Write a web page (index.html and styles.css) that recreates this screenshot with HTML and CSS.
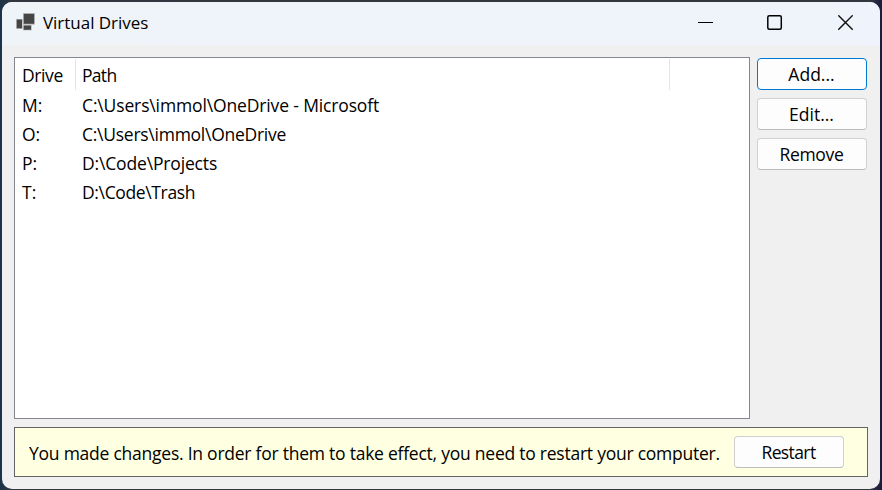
FILE: index.html
```html
<!DOCTYPE html>
<html lang="en">
<head>
<meta charset="utf-8">
<title>Virtual Drives</title>
<link rel="stylesheet" href="styles.css">
</head>
<body>
<main class="window">
  <header class="titlebar">
    <svg class="app-icon" width="20" height="18" viewBox="0 0 20 18">
      <g fill="#c9c9cb"><rect x="0" y="6" width="7" height="10"/><rect x="7" y="0" width="12" height="12"/><rect x="7" y="12" width="9" height="5.500"/></g>
      <g fill="#454545"><rect x=".7" y="6.500" width="5.300" height="8.800"/><rect x="7.700" y=".8" width="10.500" height="10"/><rect x="7.700" y="12.500" width="7.300" height="4.300"/></g>
    </svg>
    <h1 class="title"><span class="t-title">Virtual Drives</span></h1>
    <div class="controls">
      <svg width="16" height="16" viewBox="0 0 16 16"><path d="M0 7.500H15" stroke="#000"/></svg>
      <svg width="16" height="16" viewBox="0 0 16 16"><rect x=".8" y=".8" width="13.500" height="13.500" rx="1.500" fill="none" stroke="#000" stroke-width="1.500"/></svg>
      <svg width="16" height="16" viewBox="0 0 16 16"><path d="M.3 .3L14.700 14.700M14.700 .3L.3 14.700" stroke="#111" stroke-width="1.400"/></svg>
    </div>
  </header>
  <section class="content">
    <div class="list">
      <div class="row head"><div class="cell"><span class="t-drive">Drive</span></div><div class="cell"><span class="t-path">Path</span></div></div>
      <div class="row"><div class="cell"><span>M:</span></div><div class="cell"><span class="t-m">C:\Users\immol\OneDrive - Microsoft</span></div></div>
      <div class="row"><div class="cell"><span>O:</span></div><div class="cell"><span class="t-o">C:\Users\immol\OneDrive</span></div></div>
      <div class="row"><div class="cell"><span>P:</span></div><div class="cell"><span class="t-p">D:\Code\Projects</span></div></div>
      <div class="row"><div class="cell"><span>T:</span></div><div class="cell"><span class="t-t">D:\Code\Trash</span></div></div>
    </div>
    <div class="actions">
      <button class="btn primary"><span class="t-add">Add...</span></button>
      <button class="btn"><span class="t-edit">Edit...</span></button>
      <button class="btn"><span class="t-remove">Remove</span></button>
    </div>
  </section>
  <footer class="notice">
    <p class="message"><span class="t-notice">You made changes. In order for them to take effect, you need to restart your computer.</span></p>
    <button class="btn"><span class="t-restart">Restart</span></button>
  </footer>
</main>
</body>
</html>
```
FILE: styles.css
```css
* { box-sizing: border-box; }
body {
  margin: 0;
  height: 490px;
  overflow: hidden;
  padding: 2px 2px 1px;
  background: linear-gradient(90deg, #1b3449, #33363f 12px, #33363f 870px, #171b40);
  color: #000;
  font: 17.5px/24px "Open Sans", "Noto Sans", sans-serif;
}
.window {
  height: 487px;
  display: flex;
  flex-direction: column;
  border-radius: 10px;
  overflow: hidden;
  background: #f0f0f0;
}
.titlebar {
  height: 43px;
  flex: none;
  display: flex;
  align-items: center;
  padding: 0 26px 2px 14px;
  background: linear-gradient(90deg, #eff4f9, #eff3fb);
}
.app-icon { margin: -1px 7px 0 0; }
.title { margin: 0; flex: 1; font-size: 17px; font-weight: 400; letter-spacing: -0.03px; }
.controls { display: flex; gap: 54px; }
.controls svg { display: block; }
.controls svg:nth-child(2) { margin: 0 1px 0 -1px; }
.content { display: flex; gap: 7px; padding: 12px 13px 0 12px; }
.list {
  width: 736px;
  height: 362px;
  border: 1px solid #828790;
  background: #fff;
}
.row { display: grid; grid-template-columns: 60px 594px; height: 29px; align-items: center; white-space: pre; }
.cell { padding-left: 7px; }
.head { height: 32px; padding-top: 1px; }
.head .cell { width: calc(100% + 1px); height: 31px; line-height: 33px; border-right: 1px solid #e5e5e5; }
.t-drive { letter-spacing: -0.4px; }
.t-path { letter-spacing: -0.7px; }
.t-m { letter-spacing: -0.14px; }
.t-o { letter-spacing: -0.26px; }
.t-p { letter-spacing: -0.16px; }
.t-t { letter-spacing: -0.36px; }
.t-notice { letter-spacing: -0.24px; }
.t-remove { letter-spacing: -0.3px; }
.t-restart { letter-spacing: -0.6px; }
.actions { display: flex; flex-direction: column; gap: 8px; padding-top: 1px; }
.btn {
  width: 110px;
  height: 32px;
  flex: none;
  padding: 0 1px 0 0;
  border: 1px solid #d0d0d0;
  border-bottom-color: #bcbcbc;
  border-radius: 4px;
  background: #fdfdfd;
  color: #000;
  font: inherit;
}
.primary { border-color: #0078d4; }
.notice {
  height: 50px;
  margin: 8px 12px 0;
  padding: 0 23px 0 14px;
  display: flex;
  align-items: center;
  justify-content: space-between;
  border: 1px solid #646464;
  background: #ffffe1;
}
.message { margin: 2px 0 0; white-space: nowrap; }
```
